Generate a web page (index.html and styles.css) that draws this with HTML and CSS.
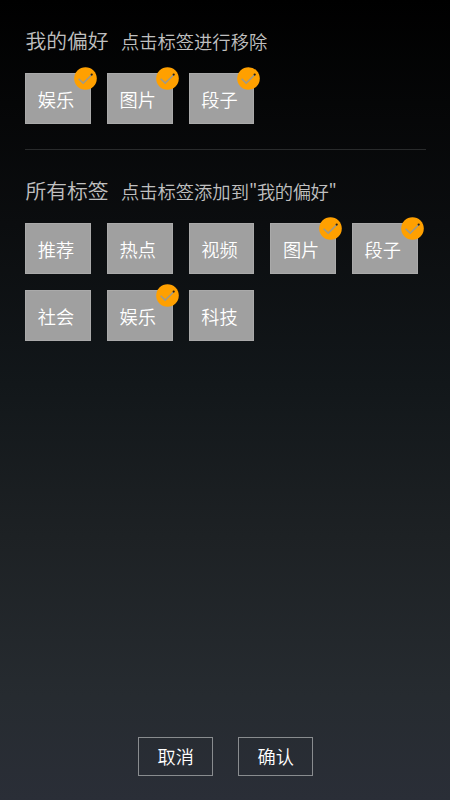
FILE: index.html
```html
<!DOCTYPE html>
<html lang="zh-CN">
<head>
<meta charset="utf-8">
<meta name="viewport" content="width=device-width, initial-scale=1">
<title>我的偏好</title>
<link rel="stylesheet" href="styles.css">
</head>
<body>
<svg class="defs" aria-hidden="true">
  <symbol id="check" viewBox="0 0 23 23">
    <circle cx="11.5" cy="11.5" r="11.3" fill="#ffa000"/>
    <path d="M4.6 11.8 9.2 16.1 17.8 7.8" fill="none" stroke="#a09a88" stroke-width="1.5"/>
    <circle cx="17.7" cy="7.6" r="1.1" fill="#242018"/>
  </symbol>
</svg>
<main class="page">
  <section class="group">
    <header class="heading"><h2>我的偏好</h2><p>点击标签进行移除</p></header>
    <div class="tags">
      <button class="tag">娱乐<svg class="badge"><use href="#check"/></svg></button>
      <button class="tag">图片<svg class="badge"><use href="#check"/></svg></button>
      <button class="tag">段子<svg class="badge"><use href="#check"/></svg></button>
    </div>
  </section>
  <section class="group group-all">
    <header class="heading"><h2>所有标签</h2><p>点击标签添加到<span class="quoted">"我的偏好"</span></p></header>
    <div class="tags">
      <button class="tag">推荐</button>
      <button class="tag">热点</button>
      <button class="tag">视频</button>
      <button class="tag">图片<svg class="badge"><use href="#check"/></svg></button>
      <button class="tag">段子<svg class="badge"><use href="#check"/></svg></button>
      <button class="tag">社会</button>
      <button class="tag">娱乐<svg class="badge"><use href="#check"/></svg></button>
      <button class="tag">科技</button>
    </div>
  </section>
  <footer class="actions">
    <button class="action">取消</button>
    <button class="action">确认</button>
  </footer>
</main>
</body>
</html>
```
FILE: styles.css
```css
* {
  box-sizing: border-box;
}

body {
  margin: 0;
  font-family: "Noto Sans CJK SC", sans-serif;
  font-weight: 350;
}

.defs {
  position: absolute;
  width: 0;
  height: 0;
}

.page {
  display: flex;
  flex-direction: column;
  height: 800px;
  padding: 24px 24px 24px 25.4px;
  background: linear-gradient(#000 0%, #0b0d0f 28%, #12171a 48%, #1d2124 67%, #262b30 87%, #2a2e37 100%);
}

.group {
  padding-bottom: 25px;
}

.group-all {
  padding-top: 23.6px;
  border-top: 1px solid #292b2c;
}

.heading {
  display: flex;
  align-items: baseline;
  gap: 12.4px;
  height: 32px;
  margin-bottom: 17.4px;
  color: #c0c0c0;
  line-height: 32px;
  white-space: nowrap;
}

.heading h2 {
  margin: 0;
  font-size: 20.8px;
  font-weight: 350;
}

.heading p {
  margin: 0;
  font-size: 18.3px;
}

.quoted {
  letter-spacing: -0.4px;
}

.tags {
  display: grid;
  grid-template-columns: repeat(5, 65.5px);
  grid-auto-rows: 51px;
  gap: 16px 16.2px;
}

.tag,
.action {
  padding: 0;
  color: #fff;
  font: inherit;
  font-size: 18.2px;
}

.tag {
  position: relative;
  padding: 0 4.2px 0 0;
  border: 1px solid #aaa;
  background: #a0a0a0;
}

.badge {
  position: absolute;
  top: -7px;
  right: -7px;
  width: 23px;
  height: 23px;
}

.actions {
  display: flex;
  justify-content: center;
  gap: 25px;
  margin-top: auto;
}

.action {
  width: 75px;
  height: 39px;
  padding: 0 0 2px;
  border: 1px solid #898c8f;
  background: transparent;
}
```
